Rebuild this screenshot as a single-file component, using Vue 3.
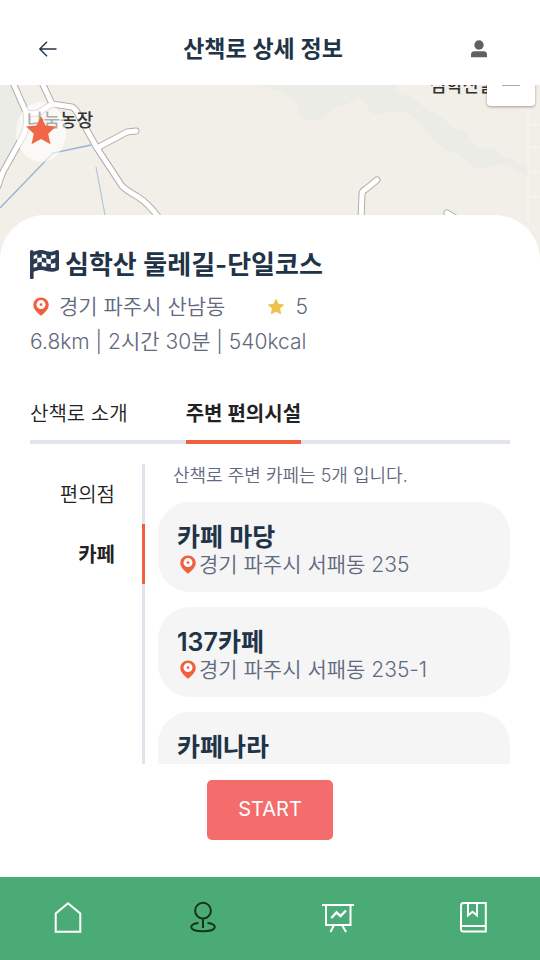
<script setup>
import { ref } from 'vue'

const activeTab = ref(1)
const tabs = ['산책로 소개', '주변 편의시설']
const activeKind = ref(1)
const kinds = ['편의점', '카페']
const cafes = [
  { name: '카페 마당', address: '경기 파주시 서패동 235' },
  { name: '137카페', address: '경기 파주시 서패동 235-1' },
  { name: '카페나라', address: '경기 파주시 서패동 241' },
]
</script>

<template>
  <div class="page">
    <header class="header">
      <button class="icon-button" type="button" aria-label="뒤로">
        <svg width="20" height="18" viewBox="0 0 20 18" fill="none" stroke="#203347" stroke-width="1.4">
          <path d="M18.5 9H2M9 1.8L1.8 9L9 16.2" />
        </svg>
      </button>
      <h1>산책로 상세 정보</h1>
      <button class="icon-button" type="button" aria-label="내 정보">
        <svg width="18" height="18" viewBox="0 0 18 18" fill="#606165">
          <circle cx="9" cy="5" r="4.7" />
          <path d="M1 17.3v-2.6Q1 11.300 4.500 11.300h9Q17 11.300 17 14.700v2.600z" />
        </svg>
      </button>
    </header>

    <section class="map" aria-label="지도">
      <svg class="terrain" viewBox="0 85 540 180" preserveAspectRatio="xMidYMin slice">
        <rect y="85" width="540" height="180" fill="#f2efe8" />
        <path fill="#ebece6" d="M0 85H14L24 110L23 132L0 172zM260 85L270 88Q286 92 291 97Q295 101 299 113Q302 121 309 121Q320 121 325 117Q331 107 341 106Q350 104 354 99Q359 94 364 101Q370 115 378 115Q395 108 408 114Q417 118 435 141Q446 152 456 154Q466 158 475 168Q480 173 488 166Q497 163 507 166L528 176V167L514 160L503 156Q497 147 486 148Q478 150 471 139Q464 128 452 128Q438 112 430 112Q420 105 412 96L396 94V85z" />
        <path d="M528 85V265M528 125H540M528 147H540M528 172H540M528 197H540" fill="none" stroke="#f7f5f0" />
        <g fill="none" stroke="#91b4d2" stroke-width="1.300">
          <path d="M0 208L53 153L91 145" />
          <path d="M96 167L105 215" opacity=".65" />
        </g>
        <g fill="none" stroke-linecap="round" stroke-linejoin="round">
          <g v-for="pass in ['casing', 'fill']" :key="pass" :class="pass">
            <path d="M10 76L26 112Q28 126 23 136L4 170Q1 176-2 186" />
            <path d="M39 76L52 104L72 107Q76 109 79 116L97 148L122 186Q126 190 138 197Q148 203 159 218" />
            <path d="M97 148L127 132L136 131" />
            <path d="M52 104L38 113L27 114" />
            <path d="M361 220L362 194Q362 191 366 189L377 180" />
            <path d="M447 213L462 222" />
          </g>
        </g>
      </svg>
      <span class="place farm">나눔농장</span>
      <span class="place hill">심학산둘</span>
      <svg class="marker" width="50" height="60" viewBox="0 0 50 60">
        <ellipse cx="25" cy="30" rx="25" ry="30" fill="#fff" fill-opacity=".6" />
        <path d="M25 14L29.500 23.500L40 24.500L32.200 31.700L34.500 42.300L25 37L15.500 42.300L17.800 31.700L10 24.500L20.500 23.500z" fill="#f06647" />
      </svg>
      <button class="map-control" type="button" aria-label="축소"></button>
    </section>

    <main class="sheet">
      <h2 class="trail-name">
        <svg width="29" height="29" viewBox="32 0 512 512" fill="#2a3c53">
          <path d="M509.5 .0234c-6.145 0-12.53 1.344-18.64 4.227c-44.11 20.86-76.81 27.94-104.1 27.94c-57.89 0-91.53-31.86-158.2-31.87C195 .3203 153.3 8.324 96 32.38V32c0-17.75-14.25-32-32-32S32 14.25 32 32L31.96 496c0 8.75 7.25 16 16 16H80C88.75 512 96 504.8 96 496V384c51.74-23.86 92.71-31.82 128.3-31.82c71.09 0 120.6 31.78 191.7 31.78c30.81 0 65.67-5.969 108.1-23.09C536.3 355.9 544 344.4 544 332.1V30.74C544 12.01 527.8 .0234 509.5 .0234zM480 141.8c-31.99 14.04-57.81 20.59-80 22.49v80.21c25.44-1.477 51.59-6.953 80-17.34V308.9c-22.83 7.441-43.93 11.08-64.03 11.08c-5.447 0-10.71-.4258-15.97-.8906V244.5c-4.436 .2578-8.893 .6523-13.29 .6523c-25.82 0-47.35-4.547-66.71-10.08v66.91c-23.81-6.055-50.17-11.41-80-12.98V213.1C236.2 213.7 232.5 213.3 228.5 213.3C208.8 213.3 185.1 217.7 160 225.1v69.1C139.2 299.4 117.9 305.8 96 314.4V250.7l24.77-10.39C134.8 234.5 147.6 229.9 160 225.1V143.4C140.9 148.5 120.1 155.2 96 165.3V101.8l24.77-10.39C134.8 85.52 147.6 80.97 160 77.02v66.41c26.39-6.953 49.09-10.17 68.48-10.16c4.072 0 7.676 .4453 11.52 .668V65.03C258.6 66.6 274.4 71.66 293.2 77.83C301.7 80.63 310.7 83.45 320 86.12v66.07c20.79 6.84 41.45 12.96 66.71 12.96c4.207 0 8.781-.4766 13.29-.8594V95.54c25.44-1.477 51.59-6.953 80-17.34V141.8zM240 133.9v80.04c18.61 1.57 34.37 6.523 53.23 12.66C301.7 229.4 310.7 232.3 320 234.1V152.2C296.4 144.6 272.5 136.5 240 133.9z" />
        </svg>
        심학산 둘레길-단일코스
      </h2>
      <div class="facts">
        <svg class="pin" width="16" height="20" viewBox="0 0 16 20">
          <path d="M8 .5C3.600 .5 .3 3.800 .3 8C.3 12.300 4.600 16.200 8 18.700C11.400 16.200 15.700 12.300 15.700 8C15.700 3.800 12.400 .5 8 .5z" fill="#f0603f" />
          <circle cx="8" cy="7.600" r="4.500" fill="#fff" />
          <circle cx="8" cy="7.600" r="1.400" fill="#f0603f" />
        </svg>
        <span class="region">경기 파주시 산남동</span>
        <svg class="star" width="18" height="18" viewBox="0 0 18 18">
          <path d="M9 1.500L11.200 6.300L16.500 6.900L12.600 10.500L13.600 15.700L9 13.200L4.400 15.700L5.400 10.500L1.500 6.900L6.800 6.300z" fill="#f0c14b" stroke="#f0c14b" stroke-linejoin="round" />
        </svg>
        <span>5</span>
      </div>
      <p class="summary">6.8km | 2시간 30분 | 540kcal</p>

      <nav class="tabs">
        <button v-for="(tab, i) in tabs" :key="tab" type="button" :class="{ active: i === activeTab }" @click="activeTab = i">{{ tab }}</button>
      </nav>

      <div class="facilities">
        <div class="kinds">
          <button v-for="(kind, i) in kinds" :key="kind" type="button" :class="{ active: i === activeKind }" @click="activeKind = i">{{ kind }}</button>
        </div>
        <div class="results">
          <p class="count">산책로 주변 카페는 5개 입니다.</p>
          <article v-for="cafe in cafes" :key="cafe.name" class="cafe">
            <h3>{{ cafe.name }}</h3>
            <p>
              <svg class="pin" width="16" height="20" viewBox="0 0 16 20">
                <path d="M8 .5C3.600 .5 .3 3.800 .3 8C.3 12.300 4.600 16.200 8 18.700C11.400 16.200 15.700 12.300 15.700 8C15.700 3.800 12.400 .5 8 .5z" fill="#f0603f" />
                <circle cx="8" cy="7.600" r="4.500" fill="#fff" />
                <circle cx="8" cy="7.600" r="1.400" fill="#f0603f" />
              </svg>
              {{ cafe.address }}
            </p>
          </article>
        </div>
      </div>

      <button class="start" type="button">START</button>
    </main>

    <nav class="bottom-nav">
      <a href="#home" aria-label="홈">
        <svg width="34" height="34" viewBox="0 0 34 34" fill="none" stroke="#fff" stroke-width="2">
          <path d="M4.700 30.700V12.400L17 2.300L29.300 12.400V30.700z" />
        </svg>
      </a>
      <a href="#trails" aria-label="산책로">
        <svg width="34" height="34" viewBox="0 0 34 34" fill="none" stroke="#173417" stroke-width="2">
          <circle cx="17" cy="9.700" r="7.900" />
          <path d="M17 17.600V27M12.500 21.900C8 22.300 5.200 23.900 5.200 26C5.200 28.600 10 30.300 17 30.300S28.800 28.600 28.800 26C28.800 23.900 26 22.300 21.500 21.900" />
        </svg>
      </a>
      <a href="#stats" aria-label="통계">
        <svg width="34" height="34" viewBox="0 0 34 34" fill="none" stroke="#fff" stroke-width="2">
          <path d="M1 4H33M5 4V24H29.500V4M13 24L9.500 31M21 24L25 31" />
          <path d="M10.300 17L15.500 11.500L19.500 15L25 9.500" stroke-width="2.400" />
        </svg>
      </a>
      <a href="#records" aria-label="기록">
        <svg width="34" height="34" viewBox="0 0 34 34" fill="none" stroke="#fff" stroke-width="2">
          <path d="M7.500 2H29.800V30.500H7.500Q5 30.500 5 28V4.500Q5 2 7.500 2zM5.500 25H29.500M12 2V14.500L16.500 10.800L21 14.500V2" />
        </svg>
      </a>
    </nav>
  </div>
</template>

<style>
body {
  background: #fff;
}
</style>

<style scoped>
* {
  box-sizing: border-box;
  margin: 0;
  padding: 0;
}

.page {
  display: flex;
  flex-direction: column;
  min-height: 100vh;
  overflow: hidden;
  color: #5f6980;
  font-family: Inter, 'Noto Sans CJK KR', sans-serif;
  font-weight: 350;
}

button {
  border: 0;
  background: none;
  color: inherit;
  font: inherit;
  cursor: pointer;
}

svg {
  display: block;
  flex: none;
}

.header {
  display: flex;
  align-items: center;
  justify-content: space-between;
  padding: 12px 38px 0;
  height: 85px;
  background: #fff;
}

.header h1 {
  color: #203347;
  font-size: 23px;
  font-weight: 600;
  line-height: 32px;
}

.icon-button {
  display: flex;
  align-items: center;
  width: 32px;
  height: 32px;
}

.icon-button:last-child {
  justify-content: center;
  width: 46px;
}

.map {
  position: relative;
  height: 180px;
  overflow: hidden;
  background: #f2efe8;
}

.terrain {
  width: 100%;
  height: 100%;
}

.casing {
  stroke: #b0afac;
  stroke-width: 7;
}

.fill {
  stroke: #fff;
  stroke-width: 5;
}

.place {
  position: absolute;
  color: #333;
  font-size: 18px;
  font-weight: 500;
  line-height: 24px;
  white-space: nowrap;
}

.farm {
  top: 24px;
  left: 27px;
}

.hill {
  top: -11px;
  right: 44px;
}

.marker {
  position: absolute;
  top: 17px;
  left: 16px;
}

.map-control {
  position: absolute;
  top: -20px;
  right: 5px;
  display: grid;
  place-items: center;
  width: 48px;
  height: 41px;
  border-radius: 4px;
  background: #fff;
  box-shadow: 0 1px 3px rgb(0 0 0 / 35%);
}

.map-control::before {
  width: 18px;
  height: 1px;
  background: #aaa;
  content: '';
}

.sheet {
  position: relative;
  display: flex;
  flex: 1;
  flex-direction: column;
  margin-top: -50px;
  padding: 31px 30px 37px;
  border-radius: 45px 45px 0 0;
  background: #fff;
}

.trail-name {
  display: flex;
  align-items: center;
  gap: 6px;
  color: #203347;
  font-size: 26px;
  font-weight: 600;
  line-height: 37px;
}

.facts {
  display: flex;
  align-items: center;
  padding-left: 3px;
  margin-top: 6px;
  font-size: 21px;
  line-height: 35px;
}

.region {
  margin: 0 42px 0 10px;
}

.star {
  margin-right: 10px;
}

.summary {
  font-size: 21px;
  line-height: 35px;
}

.tabs {
  display: flex;
  gap: 58px;
  margin-top: 36px;
  background: linear-gradient(#e0e4ec, #e0e4ec) bottom / 100% 4px no-repeat;
  color: #222;
}

.tabs button {
  height: 49px;
  padding-bottom: 10px;
  border-bottom: 4px solid transparent;
  font-size: 20px;
}

.tabs .active {
  border-color: #f0603f;
  font-weight: 600;
}

.facilities {
  display: flex;
  gap: 13px;
  height: 300px;
  margin-top: 20px;
  overflow: hidden;
}

.kinds {
  width: 115px;
  flex: none;
  background: linear-gradient(#e0e4ec, #e0e4ec) right / 3px 100% no-repeat;
  color: #222;
}

.kinds button {
  width: 100%;
  height: 60px;
  padding: 0 27px 2px 0;
  border-right: 3px solid transparent;
  font-size: 20px;
  text-align: right;
}

.kinds .active {
  border-color: #f0603f;
  font-weight: 600;
}

.results {
  display: flex;
  flex: 1;
  flex-direction: column;
  gap: 15px;
}

.count {
  padding-left: 15px;
  font-size: 18px;
  line-height: 23px;
}

.cafe {
  flex: none;
  height: 90px;
  padding: 21px 19px 0;
  border-radius: 32px;
  background: #f5f5f5;
}

.cafe h3 {
  color: #203347;
  font-size: 25px;
  font-weight: 600;
  line-height: 28px;
}

.cafe p {
  display: flex;
  align-items: center;
  gap: 3px;
  padding-left: 3px;
  font-size: 21px;
  line-height: 28px;
  white-space: nowrap;
}

.start {
  align-self: center;
  width: 126px;
  height: 60px;
  padding-bottom: 2px;
  margin-top: 16px;
  border-radius: 5px;
  background: #f56c6c;
  color: #fff;
  font-size: 20px;
  font-weight: 400;
}

.bottom-nav {
  display: grid;
  grid-template-columns: repeat(4, 1fr);
  height: 83px;
  padding-bottom: 2px;
  background: #4bab77;
}

.bottom-nav a {
  display: grid;
  place-items: center;
}
</style>
